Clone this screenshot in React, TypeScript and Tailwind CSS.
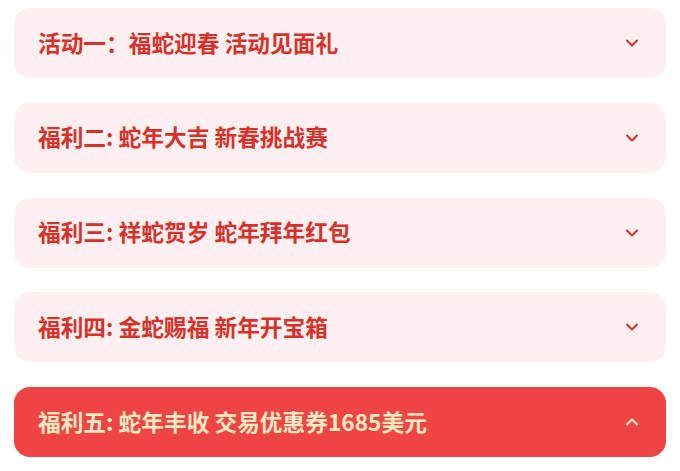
import React, { useState } from "react";
import { ChevronDown, ChevronUp } from "lucide-react";

const items = [
  "活动一：福蛇迎春 活动见面礼",
  "福利二: 蛇年大吉 新春挑战赛",
  "福利三: 祥蛇贺岁 蛇年拜年红包",
  "福利四: 金蛇赐福 新年开宝箱",
  "福利五: 蛇年丰收 交易优惠券1685美元",
];

export default function App() {
  const [open, setOpen] = useState(4);

  return (
    <div
      className="flex flex-col gap-[24.75px] px-[14px] pt-2 pb-3 bg-white"
      style={{ fontFamily: '"Noto Sans CJK SC", "Noto Sans", sans-serif' }}
    >
      {items.map((label, i) => {
        const active = open === i;
        return (
          <button
            key={label}
            onClick={() => setOpen(active ? -1 : i)}
            className={`flex h-[70px] w-full items-center justify-between rounded-2xl px-6 text-left ${
              active ? "bg-[#ef4444] text-[#fee9c2]" : "bg-[#fef0f0] text-[#d9302a]"
            }`}
          >
            <span className="text-[22.7px] font-bold leading-none">{label}</span>
            {active ? (
              <ChevronUp size={20} strokeWidth={2.5} />
            ) : (
              <ChevronDown size={20} strokeWidth={2.5} />
            )}
          </button>
        );
      })}
    </div>
  );
}
